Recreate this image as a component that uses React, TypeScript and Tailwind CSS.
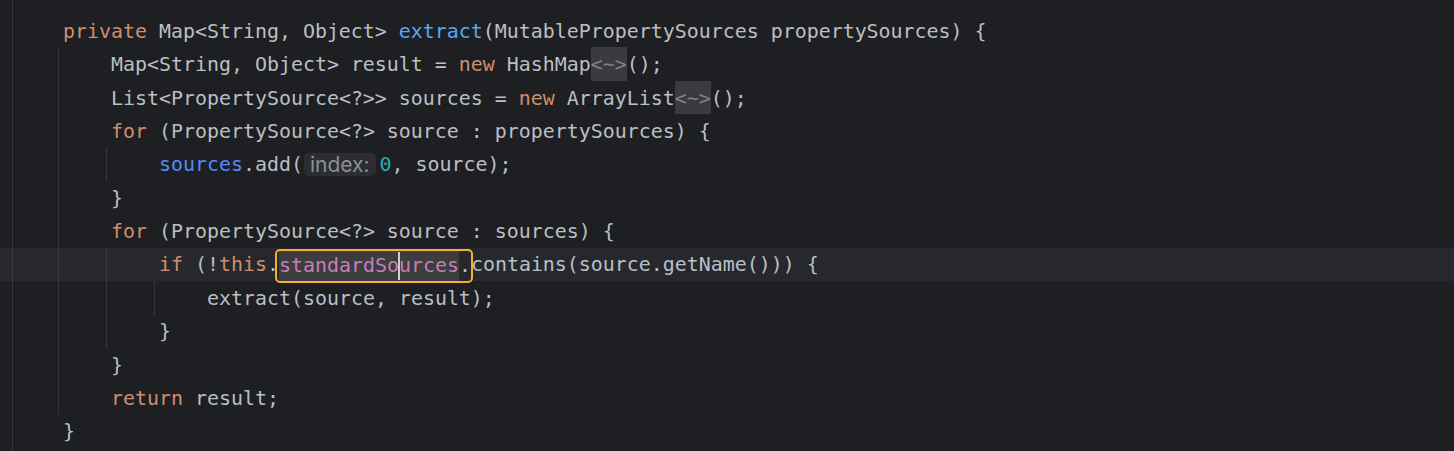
import React from 'react';

const KW = 'text-[#cf8e6d]';
const FN = 'text-[#56a8f5]';
const VAR = 'text-[#548af7]';
const NUM = 'text-[#2aacb8]';

interface LineProps {
  level: number;
  guides?: number[];
  current?: boolean;
  children?: React.ReactNode;
}

const Gutter = () => (
  <>
    <div className="w-[12px] shrink-0" />
    <div className="w-px shrink-0 bg-[#35373b]" />
    <div className="w-[2px] shrink-0" />
  </>
);

const Line: React.FC<LineProps> = ({ level, guides = [], current = false, children }) => (
  <div className={`flex h-[33.4px] shrink-0 ${current ? 'bg-[#26282e]' : ''}`}>
    <Gutter />
    {Array.from({ length: level }).map((_, i) => (
      <div key={i} className="w-[48px] shrink-0 flex justify-end">
        {guides.includes(i + 1) && <div className="w-px mr-[4px] bg-[#35373b]" />}
      </div>
    ))}
    <div className="flex items-center whitespace-pre pt-[2px]">{children}</div>
  </div>
);

// folded diamond "<~>"
const Fold = () => (
  <span className="self-stretch -mt-[2px] flex items-center pt-[2px] bg-[#393b40] text-[#7f8289]">{'<~>'}</span>
);

const Hint = ({ label }: { label: string }) => (
  <span className="ml-px mr-[4px] -mt-[2px] h-[23px] px-[6px] rounded-[5px] bg-[#2b2d30] text-[#8c8f96] font-['Inter',sans-serif] text-[21px] flex items-center">
    {label}
  </span>
);

export default function App() {
  return (
    <div className="h-[451px] w-full overflow-hidden bg-[#1e1f22] text-[#bcbec4] flex flex-col font-['DejaVu_Sans_Mono',monospace] text-[19.93px]">
      <div className="flex h-[14px] shrink-0">
        <Gutter />
      </div>

      <Line level={1}>
        <span className={KW}>private</span> Map&lt;String, Object&gt; <span className={FN}>extract</span>(MutablePropertySources propertySources) {'{'}
      </Line>
      <Line level={2} guides={[1]}>
        Map&lt;String, Object&gt; result = <span className={KW}>new</span> HashMap<Fold />();
      </Line>
      <Line level={2} guides={[1]}>
        List&lt;PropertySource&lt;?&gt;&gt; sources = <span className={KW}>new</span> ArrayList<Fold />();
      </Line>
      <Line level={2} guides={[1]}>
        <span className={KW}>for</span> (PropertySource&lt;?&gt; source : propertySources) {'{'}
      </Line>
      <Line level={3} guides={[1, 2]}>
        <span className={VAR}>sources</span>.add(<Hint label="index:" /><span className={NUM}>0</span>, source);
      </Line>
      <Line level={2} guides={[1]}>
        {'}'}
      </Line>
      <Line level={2} guides={[1]}>
        <span className={KW}>for</span> (PropertySource&lt;?&gt; source : sources) {'{'}
      </Line>
      <Line level={3} guides={[1, 2]} current>
        <span className={KW}>if</span> (!<span className={KW}>this</span>.
        <span className="self-stretch mt-[1px] -ml-[2px] pl-[2px] flex items-center rounded-[3px] outline-2 outline-solid outline-[#f2b130]">
          <span className="self-stretch flex items-center bg-[#3b3e3c] text-[#c77dbb]">
            standardSo
            <span className="w-[2px] h-[28px] -mx-px bg-[#ced0d6]" />
            urces
          </span>
          <span>.</span>
        </span>
        contains(source.getName())) {'{'}
      </Line>
      <Line level={4} guides={[1, 2, 3]}>
        extract(source, result);
      </Line>
      <Line level={3} guides={[1, 2]}>
        {'}'}
      </Line>
      <Line level={2} guides={[1]}>
        {'}'}
      </Line>
      <Line level={2} guides={[1]}>
        <span className={KW}>return</span> result;
      </Line>
      <Line level={1}>{'}'}</Line>

      <div className="flex flex-1">
        <Gutter />
      </div>
    </div>
  );
}
